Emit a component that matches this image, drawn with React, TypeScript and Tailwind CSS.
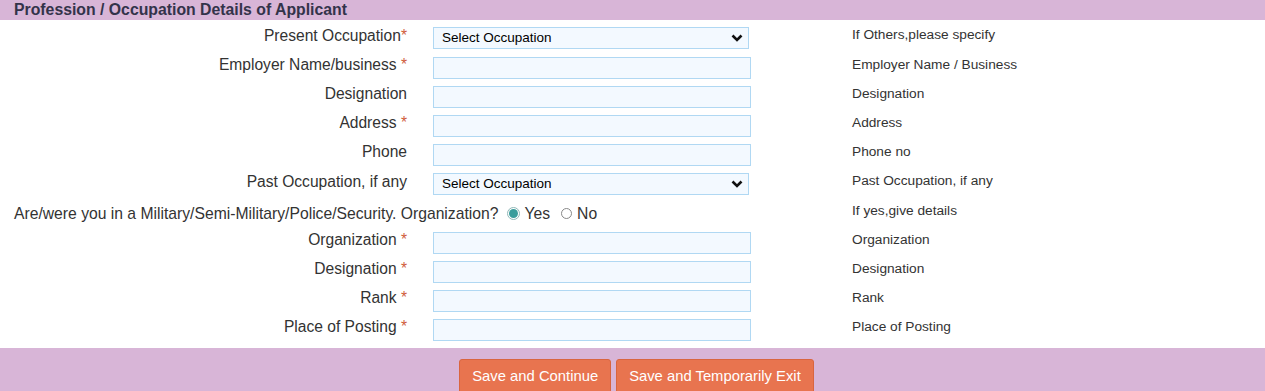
import React from 'react'

const Star = ({ space = true }: { space?: boolean }) => (
  <span className="text-[#cf5d3d]">{space ? ' *' : '*'}</span>
)

const TextBox = () => (
  <input
    type="text"
    className="block h-[22px] w-[318px] border border-[#b0d8f3] bg-[#f3f9ff] px-1 text-[13px] outline-none"
  />
)

const SelectBox = () => (
  <div className="relative w-[316px]">
    <select className="block h-[22px] w-full appearance-none border border-[#b0d8f3] bg-[#f3f9ff] pl-[8px] text-[13.5px] text-black outline-none">
      <option>Select Occupation</option>
    </select>
    {/* chevron */}
    <svg
      className="pointer-events-none absolute right-[6px] top-[7px]"
      width="12"
      height="8"
      viewBox="0 0 12 8"
    >
      <path d="M1.5 1.5 L6 6 L10.5 1.5" fill="none" stroke="#111" strokeWidth="2.6" />
    </svg>
  </div>
)

type RowProps = {
  label: React.ReactNode
  field: React.ReactNode
  hint: string
  tall?: boolean
}

const Row = ({ label, field, hint, tall }: RowProps) => (
  <div className={`flex items-center ${tall ? 'h-[30px]' : 'h-[29px]'}`}>
    <div className="w-[407px] text-right text-[15.6px] leading-[18px] text-[#333] -mt-[5px]">{label}</div>
    <div className="ml-[26px] w-[318px]">{field}</div>
    <div className="ml-[101px] text-[13.7px] leading-[16px] text-[#333] -mt-[6px]">{hint}</div>
  </div>
)

const App = () => {
  return (
    <div className="h-[391px] w-[1265px] overflow-hidden bg-white font-['Liberation_Sans',Arial,sans-serif]">
      {/* Section header */}
      <div className="h-[20px] bg-[#d8b5d7] pl-[14px] text-[15.8px] font-bold leading-[19px] text-[#33334a]">
        Profession / Occupation Details of Applicant
      </div>

      {/* Form rows */}
      <div className="flex flex-col pt-[3px] pb-[4px]">
        <Row tall label={<>Present Occupation<Star space={false} /></>} field={<SelectBox />} hint="If Others,please specify" />
        <Row label={<>Employer Name/business<Star /></>} field={<TextBox />} hint="Employer Name / Business" />
        <Row label="Designation" field={<TextBox />} hint="Designation" />
        <Row label={<>Address<Star /></>} field={<TextBox />} hint="Address" />
        <Row label="Phone" field={<TextBox />} hint="Phone no" />
        <Row tall label="Past Occupation, if any" field={<SelectBox />} hint="Past Occupation, if any" />

        {/* Military question */}
        <div className="flex h-[29px] items-center">
          <div className="flex w-[751px] items-center pl-[14px] text-[15.7px] leading-[18px] text-[#333]">
            <span>Are/were you in a Military/Semi-Military/Police/Security. Organization?</span>
            <span className="ml-[9px] flex h-[13px] w-[13px] items-center justify-center rounded-full border border-[#8fb8b8] bg-white">
              <span className="h-[9px] w-[9px] rounded-full bg-[#3a9d9c]" />
            </span>
            <span className="ml-[4px]">Yes</span>
            <span className="ml-[11px] h-[11px] w-[11px] rounded-full border border-[#888] bg-white" />
            <span className="ml-[5px]">No</span>
          </div>
          <div className="ml-[101px] -mt-[6px] text-[13.7px] leading-[16px] text-[#333]">If yes,give details</div>
        </div>

        <Row label={<>Organization<Star /></>} field={<TextBox />} hint="Organization" />
        <Row label={<>Designation<Star /></>} field={<TextBox />} hint="Designation" />
        <Row label={<>Rank<Star /></>} field={<TextBox />} hint="Rank" />
        <Row label={<>Place of Posting<Star /></>} field={<TextBox />} hint="Place of Posting" />
      </div>

      {/* Footer buttons */}
      <div className="flex h-[60px] justify-center gap-[5px] bg-[#d8b5d7] pt-[11px] pl-[8px]">
        <button className="h-[34px] rounded-t-[3px] border border-[#d9653f] bg-[#e8744f] px-[12px] text-[14.8px] text-white">
          Save and Continue
        </button>
        <button className="h-[34px] rounded-t-[3px] border border-[#d9653f] bg-[#e8744f] px-[12px] text-[14.8px] text-white">
          Save and Temporarily Exit
        </button>
      </div>
    </div>
  )
}

export default App
